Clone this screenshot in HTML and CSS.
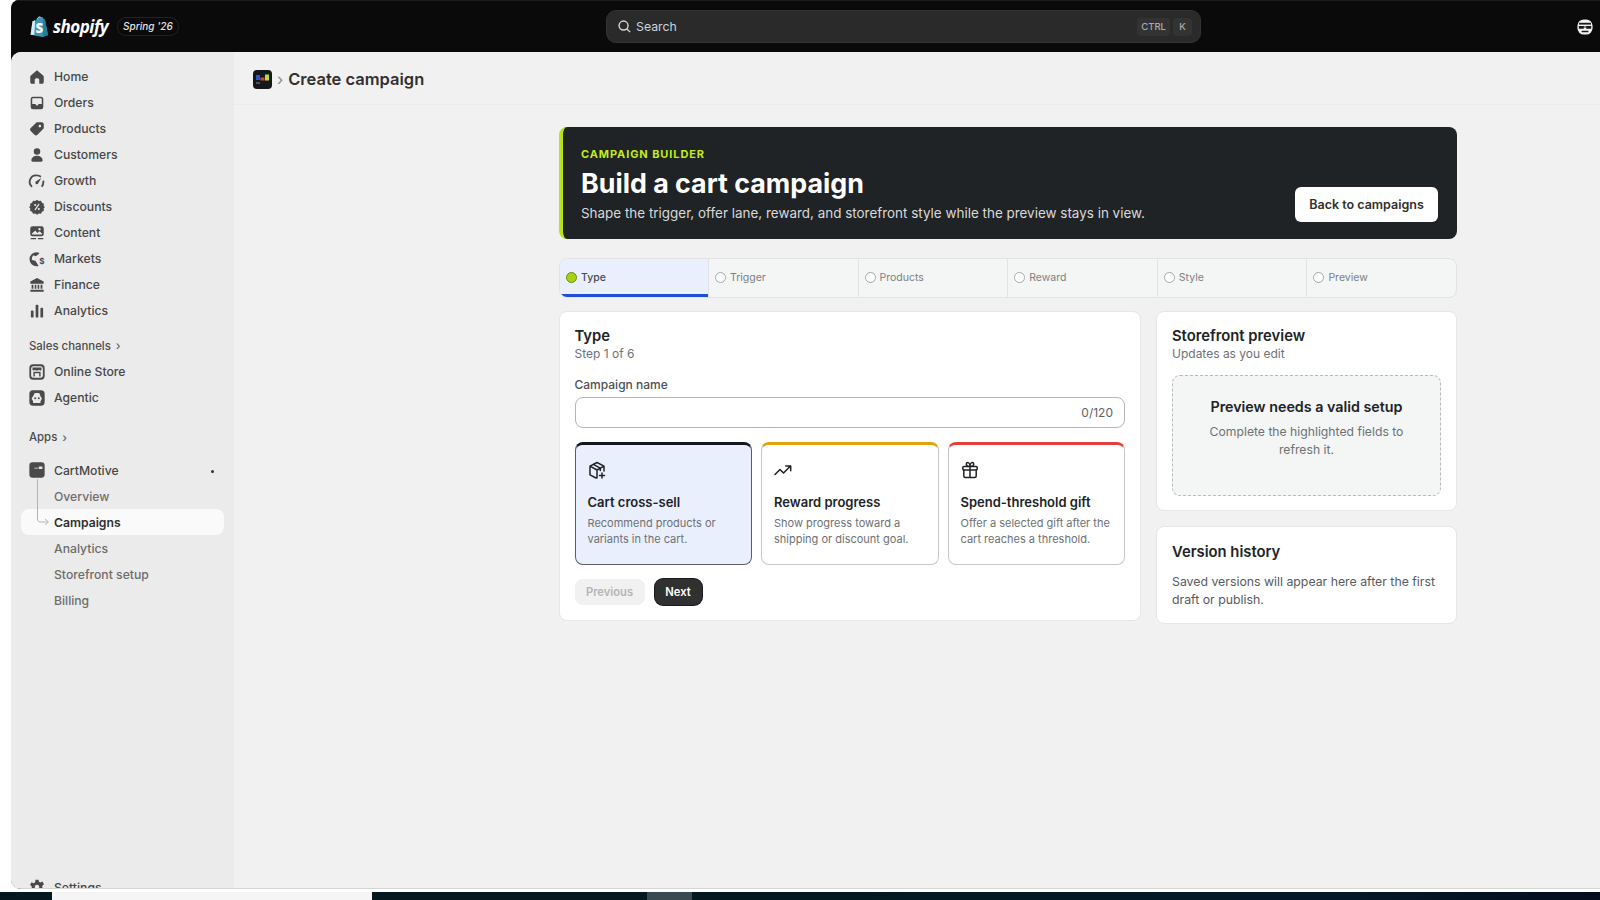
FILE: index.html
```html
<!DOCTYPE html>
<html lang="en">
<head>
  <meta charset="UTF-8">
  <title>Create campaign</title>
  <link rel="stylesheet" href="styles.css">
</head>
<body>
  <div class="window">
    <header class="topbar">
      <div class="brand">
        <svg class="bag" viewBox="0 0 20 23" width="19" height="22">
          <path d="M2.6 5.4 7 4c.6-2 1.900-3.600 3.400-3.600.6 0 1 .3 1.300.7l1.400-.2 1.300 2 1.200 1L18.800 20 13.400 22 .6 19.600z" fill="#3d93b8"/>
          <path d="M2.600 5.400 5.400 4.500 4.500 20 .6 19.600z" fill="#d4edf6"/>
          <path d="M7.200 4c.5-1.800 1.700-3 3-3 .4 0 .8.200 1 .5" fill="none" stroke="#cfe6ef" stroke-width=".8"/>
          <path d="M13.600 3 15 4l1 .4L19 20l-5.600 2z" fill="#1f7f9c"/>
          <text x="5.800" y="17.500" class="bag-s">S</text>
        </svg>
        <span class="wordmark">shopify</span>
        <span class="season">Spring '26</span>
      </div>
      <div class="search">
        <svg viewBox="0 0 16 16" width="15" height="15" fill="none" stroke="#d6d6d6" stroke-width="1.5"><circle cx="7" cy="7" r="4.8"/><path d="m10.600 10.600 3.400 3.400"/></svg>
        <span class="search-label">Search</span>
        <kbd class="key">CTRL</kbd>
        <kbd class="key">K</kbd>
      </div>
      <svg class="avatar" viewBox="0 0 16 16" width="16" height="16">
        <rect x=".4" y=".4" width="15.200" height="15.200" rx="6.500" fill="#f2f2f2"/>
        <path d="M2 3.800h12v1.800H2z" fill="#1a1a1a"/>
        <path d="M1.800 7h5v2.800h-5zM9.200 7h5v2.800h-5zM6 7.400h4v1H6zM4.600 11.800h6.800v1.400H4.600z" fill="#1a1a1a"/>
      </svg>
    </header>

    <div class="shell">
      <nav class="sidebar">
        <a class="nav-row"><svg class="nav-icon" viewBox="0 0 20 20"><path d="M10 2.500 3.200 8.300c-.4.300-.7.800-.7 1.400v6.100c0 .9.700 1.700 1.700 1.700H7.500v-4.200c0-1 .8-1.800 1.800-1.800h1.400c1 0 1.800.8 1.800 1.800v4.200h3.300c1 0 1.700-.8 1.700-1.700V9.700c0-.6-.3-1.100-.7-1.400z"/></svg>Home</a>
        <a class="nav-row"><svg class="nav-icon" viewBox="0 0 20 20"><path fill-rule="evenodd" d="M5.500 3h9A2.500 2.500 0 0 1 17 5.500v9a2.500 2.500 0 0 1-2.500 2.500h-9A2.500 2.500 0 0 1 3 14.500v-9A2.500 2.500 0 0 1 5.500 3zm-.8 8.200V5.500c0-.5.4-.8.8-.8h9c.4 0 .8.300.8.800v5.700h-3.200c-.4 0-.7.300-.8.600-.2.700-.8 1.200-1.300 1.200s-1.100-.5-1.300-1.200c-.1-.3-.4-.6-.8-.6z"/></svg>Orders</a>
        <a class="nav-row"><svg class="nav-icon" viewBox="0 0 20 20"><path fill-rule="evenodd" d="M11.500 2.500h3.700c1.300 0 2.300 1 2.300 2.300v3.700c0 .6-.2 1.200-.7 1.600l-6.300 6.400c-.9.900-2.400.9-3.300 0l-4.200-4.200c-.9-.9-.9-2.400 0-3.300l6.400-6.300c.4-.3 1-.2 2.100-.2zm1.700 5.700a1.400 1.400 0 1 0 0-2.800 1.400 1.400 0 0 0 0 2.800z"/></svg>Products</a>
        <a class="nav-row"><svg class="nav-icon" viewBox="0 0 20 20"><circle cx="10" cy="6" r="3.600"/><path d="M10 10.800c-3.600 0-6 2-6.300 4.800-.1 1 .6 1.800 1.600 1.800h9.400c1 0 1.700-.8 1.600-1.800-.3-2.800-2.700-4.800-6.300-4.800z"/></svg>Customers</a>
        <a class="nav-row"><svg class="nav-icon" viewBox="0 0 20 20"><path class="stroke" d="M4.500 16.500A7.200 7.200 0 0 1 10 3.800c1.700 0 3.200.6 4.400 1.500M17 9.500c.3 2.700-.4 5-1.700 7"/><path d="m14.800 6.600-3.300 5.600a1.700 1.700 0 1 1-2.500-1.800z"/></svg>Growth</a>
        <a class="nav-row"><svg class="nav-icon" viewBox="0 0 20 20"><path fill-rule="evenodd" d="m10 2 2 1.400 2.400-.3 1.100 2.200 2.200 1.100-.3 2.400L18.800 10l-1.400 1.800.3 2.400-2.200 1.100-1.100 2.200-2.400-.3L10 18.600l-2-1.400-2.400.3-1.100-2.200-2.200-1.100.3-2.400L1.200 10l1.400-1.200-.3-2.400 2.200-1.100 1.100-2.200 2.400.3zM8 9a1.200 1.200 0 1 0 0-2.400A1.200 1.200 0 0 0 8 9zm4 4.400a1.200 1.200 0 1 0 0-2.400 1.200 1.200 0 0 0 0 2.400zm.8-6.300-.9-.9-4.700 6.700.9.900z"/></svg>Discounts</a>
        <a class="nav-row"><svg class="nav-icon" viewBox="0 0 20 20"><path fill-rule="evenodd" d="M5 2.500h10A2.500 2.500 0 0 1 17.500 5v6a2.500 2.500 0 0 1-2.500 2.500H5A2.500 2.500 0 0 1 2.500 11V5A2.500 2.500 0 0 1 5 2.500zm-.8 8.300c.1.500.4.900.8.900h10c.4 0 .8-.4.800-.9l-3-2.800-2.400 2-2.300-2.800zM12.800 7a1.300 1.300 0 1 0 0-2.600 1.300 1.300 0 0 0 0 2.600z"/><path d="M3 15.500h6V17H3zM11 15.500h6V17h-6z"/></svg>Content</a>
        <a class="nav-row"><svg class="nav-icon" viewBox="0 0 20 20"><path d="M9.500 2.500a7.800 7.800 0 0 0 0 15.600c.8 0 1.600-.1 2.300-.4-.8-1-1.300-2-1.800-2.900L8.200 12l-3.800-.8c-.5-1.800.1-4 1.600-5.400l2.500 1.200 2.500-1.700L12.800 3.200c-1-.4-2.100-.7-3.300-.7z"/><text x="12.400" y="15.600" class="icon-dollar">$</text></svg>Markets</a>
        <a class="nav-row"><svg class="nav-icon" viewBox="0 0 20 20"><path d="M10 2.200 2.600 6.200v2.300h14.800V6.200zM4 9.800h2v4.400H4zM7.500 9.800h1.800v4.400H7.500zM10.700 9.800h1.800v4.400h-1.800zM14 9.800h2v4.400h-2zM2.600 15.400h14.800v2.200H2.600z"/></svg>Finance</a>
        <a class="nav-row"><svg class="nav-icon" viewBox="0 0 20 20"><rect x="3.200" y="9.500" width="3" height="7.800" rx="1"/><rect x="8.500" y="3" width="3" height="14.300" rx="1"/><rect x="13.800" y="6.500" width="3" height="10.800" rx="1"/></svg>Analytics</a>

        <div class="nav-heading">Sales channels <span class="chevron">›</span></div>
        <a class="nav-row"><svg class="nav-icon" viewBox="0 0 20 20"><rect x="1.500" y="1.500" width="17" height="17" rx="4"/><rect x="3.500" y="3.500" width="13" height="13" rx="2.500" fill="#ebebeb"/><path d="M5 5h10v2.400c0 1.200-2.400 1.200-2.500 0-.1 1.200-5 1.200-5 0C7.400 8.600 5 8.600 5 7.400zM6 9.800h8V15h-1.600v-3.600H7.600V15H6z"/></svg>Online Store</a>
        <a class="nav-row"><svg class="nav-icon" viewBox="0 0 20 20"><rect x="1.500" y="1.500" width="17" height="17" rx="4"/><path fill-rule="evenodd" d="M7.500 4.500h5l1.400 3.500 1.600 2.500-1.600 3v2H5.600v-2L4 10.500 5.600 8zm.5 4.800a1.100 1.100 0 1 0 0 2.200 1.100 1.100 0 0 0 0-2.200zm4 0a1.100 1.100 0 1 0 0 2.200 1.100 1.100 0 0 0 0-2.200z" fill="#ebebeb"/></svg>Agentic</a>

        <div class="nav-heading nav-heading-apps">Apps <span class="chevron">›</span></div>
        <div class="app-group">
          <svg class="app-tree" viewBox="0 0 14 46" width="14" height="46" fill="none" stroke="#b3b3b3" stroke-width="1"><path d="M.5 0v40c0 2 1 3 3 3h7M8 40l3.500 3-3.500 3"/></svg>
          <a class="nav-row app-row"><svg class="nav-icon" viewBox="0 0 20 20"><rect x="1.500" y="1.500" width="17" height="17" rx="3.500" fill="#4a4a4a"/><path d="M12 6h4v3h-4zM7 7.500h4v.8H7z" fill="#e8e8e8"/></svg>CartMotive<span class="app-dot"></span></a>
          <a class="nav-row sub-row">Overview</a>
          <a class="nav-row sub-row sub-row-active">Campaigns</a>
          <a class="nav-row sub-row">Analytics</a>
          <a class="nav-row sub-row">Storefront setup</a>
          <a class="nav-row sub-row">Billing</a>
        </div>

        <a class="nav-row nav-settings"><svg class="nav-icon" viewBox="0 0 20 20"><path fill-rule="evenodd" d="M8.300 2h3.400l.5 2.300 1.700.8 2.100-1.100 1.700 2.900-1.800 1.600v2l1.800 1.600-1.700 2.900-2.100-1.100-1.700.8-.5 2.300H8.300l-.5-2.300-1.700-.8L4 15.800l-1.700-2.900L4.100 11.300v-2L2.300 7.700 4 4.800l2.100 1.100 1.700-.8zM10 12.500a2.500 2.500 0 1 0 0-5 2.500 2.500 0 0 0 0 5z"/></svg>Settings</a>
      </nav>

      <main class="main">
        <div class="page-header">
          <svg class="page-icon" viewBox="0 0 19 19" width="19" height="19">
            <rect width="19" height="19" rx="4" fill="#14181c"/>
            <rect x="3" y="5" width="4" height="5" fill="#2f56c9"/>
            <rect x="7.500" y="7.500" width="4" height="3" fill="#d8432f"/>
            <rect x="12" y="4.500" width="4" height="6" fill="#b7d84a"/>
            <rect x="3" y="12.500" width="4" height="1" fill="#8a8a8a"/>
          </svg>
          <span class="crumb-sep">›</span>
          <h1 class="page-title">Create campaign</h1>
        </div>

        <div class="builder">
          <section class="hero">
            <div class="hero-copy">
              <div class="hero-eyebrow">CAMPAIGN BUILDER</div>
              <h2 class="hero-title">Build a cart campaign</h2>
              <p class="hero-text">Shape the trigger, offer lane, reward, and storefront style while the preview stays in view.</p>
            </div>
            <button class="back-button">Back to campaigns</button>
          </section>

          <ol class="steps">
            <li class="step step-active"><span class="step-dot"></span>Type</li>
            <li class="step"><span class="step-dot"></span>Trigger</li>
            <li class="step"><span class="step-dot"></span>Products</li>
            <li class="step"><span class="step-dot"></span>Reward</li>
            <li class="step"><span class="step-dot"></span>Style</li>
            <li class="step"><span class="step-dot"></span>Preview</li>
          </ol>

          <div class="columns">
            <section class="card card-main">
              <h3 class="card-title">Type</h3>
              <div class="card-sub">Step 1 of 6</div>
              <label class="field-label">Campaign name</label>
              <div class="field"><span class="field-count">0/120</span></div>
              <div class="types">
                <div class="type type-selected">
                  <svg class="type-icon" viewBox="0 0 20 20" fill="none"><path d="M9 18 3 14.800V6.200L10 2.500l7 3.700v4.800M3 6.200l7 3.800 7-3.800M10 10v8M6.300 4.300l7 3.800v2.400M15 13v5M12.500 15.500h5"/></svg>
                  <div class="type-title">Cart cross-sell</div>
                  <p class="type-text">Recommend products or variants in the cart.</p>
                </div>
                <div class="type type-amber">
                  <svg class="type-icon" viewBox="0 0 20 20" fill="none"><path d="m2 14.500 5-5 3.500 3.500 7-7M12.800 6h4.900v4.800"/></svg>
                  <div class="type-title">Reward progress</div>
                  <p class="type-text">Show progress toward a shipping or discount goal.</p>
                </div>
                <div class="type type-red">
                  <svg class="type-icon" viewBox="0 0 20 20" fill="none"><rect x="2.800" y="6.500" width="14.400" height="3.500" rx="1"/><path d="M3.800 10v6c0 .9.700 1.500 1.500 1.500h9.400c.8 0 1.500-.6 1.500-1.500v-6M10 6.500v11M10 6.500C8 6.500 6.300 5.500 6.300 4c0-1 .7-1.500 1.500-1.500C9 2.500 10 4.500 10 6.500zm0 0c2 0 3.700-1 3.700-2.500 0-1-.7-1.500-1.500-1.500C11 2.500 10 4.500 10 6.500z"/></svg>
                  <div class="type-title">Spend-threshold gift</div>
                  <p class="type-text">Offer a selected gift after the cart reaches a threshold.</p>
                </div>
              </div>
              <div class="actions">
                <button class="btn-prev">Previous</button>
                <button class="btn-next">Next</button>
              </div>
            </section>

            <div class="side">
              <section class="card card-preview">
                <h3 class="card-title">Storefront preview</h3>
                <div class="card-sub">Updates as you edit</div>
                <div class="preview-empty">
                  <div class="preview-title">Preview needs a valid setup</div>
                  <p class="preview-text">Complete the highlighted fields to refresh it.</p>
                </div>
              </section>
              <section class="card card-history">
                <h3 class="card-title">Version history</h3>
                <p class="history-text">Saved versions will appear here after the first draft or publish.</p>
              </section>
            </div>
          </div>
        </div>
      </main>
    </div>
  </div>

  <div class="taskbar">
    <span class="task task-dark"></span>
    <span class="task task-light"></span>
    <span class="task task-dark task-mid"></span>
    <span class="task task-grey"></span>
    <span class="task task-rest"></span>
  </div>
</body>
</html>
```

FILE: styles.css
```css
* {
  box-sizing: border-box;
}
body {
  margin: 0;
  height: 100vh;
  overflow: hidden;
  background: #fff;
  font-family: Inter, "Liberation Sans", sans-serif;
  color: #303030;
}
h1, h2, h3, p, ol {
  margin: 0;
  padding: 0;
}

.window {
  margin-left: 11px;
  height: 889px;
  display: flex;
  flex-direction: column;
  background: #0a0a0a;
  border-top-left-radius: 8px;
  border-bottom-left-radius: 10px;
  overflow: hidden;
}

/* top bar */
.topbar {
  height: 52px;
  flex: none;
  display: flex;
  align-items: center;
  border-top: 1px solid #1c1c1c;
  padding-right: 7px;
}
.brand {
  width: 595px;
  padding-left: 19px;
  display: flex;
  align-items: center;
}
.bag {
  flex: none;
}
.bag-s {
  font-family: "Open Sans", sans-serif;
  font-weight: 800;
  font-size: 14px;
  fill: #fff;
}
.wordmark {
  margin-left: 4px;
  font-family: "Open Sans", sans-serif;
  font-weight: 700;
  font-style: italic;
  font-size: 17px;
  letter-spacing: -0.5px;
  color: #fff;
}
.season {
  margin-left: 9px;
  height: 19px;
  padding: 0 5px;
  border: 1px solid #222;
  border-radius: 9px;
  font-size: 10px;
  font-style: italic;
  font-weight: 500;
  line-height: 17px;
  color: #e3e3e3;
}
.search {
  width: 595px;
  height: 33px;
  display: flex;
  align-items: center;
  gap: 3px;
  padding: 0 8px 0 10px;
  background: #2a2a2a;
  border: 1px solid #333;
  border-radius: 10px;
  font-size: 12.3px;
  color: #cfd3d8;
}
.search-label {
  margin-left: 1px;
  margin-top: -1px;
  flex: 1;
}
.key {
  height: 18px;
  padding: 0 4px;
  border-radius: 4px;
  background: #333;
  font-family: inherit;
  font-size: 9.5px;
  font-weight: 500;
  line-height: 18px;
  color: #a9acaf;
}
.key:last-child {
  min-width: 19px;
  text-align: center;
}
.avatar {
  margin-left: auto;
}

/* shell */
.shell {
  flex: 1;
  min-height: 0;
  display: flex;
  border-top-left-radius: 10px;
  overflow: hidden;
  border-bottom: 1px solid #d4d4d4;
  background: #f1f1f1;
}

/* sidebar */
.sidebar {
  width: 223px;
  flex: none;
  display: flex;
  flex-direction: column;
  padding: 11.5px 10px 0;
  background: #ebebeb;
  font-size: 12.2px;
}
.nav-row {
  position: relative;
  height: 26px;
  flex: none;
  display: flex;
  align-items: center;
  gap: 8px;
  padding-left: 7px;
  font-weight: 500;
  color: #474747;
}
.nav-icon {
  width: 18px;
  height: 18px;
  flex: none;
  fill: #4a4a4a;
}
.nav-icon .stroke {
  fill: none;
  stroke: #4a4a4a;
  stroke-width: 2;
}
.icon-dollar {
  font-size: 9px;
  font-weight: 700;
  fill: #4a4a4a;
}
.nav-heading {
  height: 26px;
  flex: none;
  margin-top: 9px;
  padding-left: 8px;
  display: flex;
  align-items: center;
  gap: 5px;
  font-size: 11.4px;
  font-weight: 500;
  color: #4d4d4d;
}
.nav-heading-apps {
  margin-top: 13.5px;
}
.chevron {
  font-size: 12px;
  color: #666;
}
.app-group {
  position: relative;
  margin-top: 7px;
}
.app-tree {
  position: absolute;
  left: 16px;
  top: 22px;
  z-index: 1;
}
.app-dot {
  position: absolute;
  right: 10px;
  top: 13px;
  width: 3px;
  height: 3px;
  border-radius: 50%;
  background: #303030;
}
.sub-row {
  padding-left: 33px;
  color: #6d6d6d;
}
.sub-row-active {
  background: #fafafa;
  border-radius: 8px;
  font-weight: 600;
  color: #303030;
}
.nav-settings {
  margin-top: auto;
  margin-bottom: -12px;
}

/* main */
.main {
  flex: 1;
  min-width: 0;
}
.page-header {
  height: 53px;
  display: flex;
  align-items: center;
  padding: 2px 0 0 19px;
  border-bottom: 1px solid #ebebeb;
}
.crumb-sep {
  margin: 0 5px 0 5px;
  font-size: 16px;
  color: #8a8a8a;
}
.page-title {
  font-size: 16.5px;
  font-weight: 600;
  color: #303030;
}
.builder {
  width: 898px;
  margin: 22px 0 0 325px;
}

/* hero */
.hero {
  height: 112px;
  display: flex;
  align-items: flex-end;
  justify-content: space-between;
  padding: 19px 19px 17px 18px;
  background: #202326;
  border-left: 4px solid #b9e21e;
  border-radius: 8px;
}
.hero-eyebrow {
  font-size: 11px;
  font-weight: 700;
  letter-spacing: 0.9px;
  line-height: 14px;
  color: #c1ec1d;
}
.hero-title {
  margin-top: 5px;
  font-size: 26.8px;
  font-weight: 700;
  line-height: 34px;
  color: #fff;
}
.hero-text {
  margin-top: 4px;
  font-size: 13.45px;
  line-height: 18px;
  color: #d9dadb;
}
.back-button {
  width: 143px;
  height: 35px;
  padding-bottom: 2px;
  background: #fff;
  border: 0;
  border-radius: 6px;
  font-family: inherit;
  font-size: 12.5px;
  font-weight: 600;
  color: #303030;
}

/* steps */
.steps {
  list-style: none;
  height: 40px;
  margin-top: 19px;
  display: grid;
  grid-template-columns: 148px repeat(5, 1fr);
  background: #f4f5f5;
  border: 1px solid #e3e3e3;
  border-radius: 8px;
  overflow: hidden;
}
.step {
  display: flex;
  align-items: center;
  gap: 4px;
  padding: 0 0 2px 6px;
  border-left: 1px solid #e3e3e3;
  font-size: 10.5px;
  font-weight: 400;
  color: #7b7f83;
}
.step:first-child {
  border-left: 0;
}
.step-dot {
  width: 11px;
  height: 11px;
  border: 1.5px solid #a5a8ab;
  border-radius: 50%;
  background: #fff;
}
.step-active {
  background: #e9effd;
  box-shadow: inset 0 -3px 0 #1d4ed8;
  font-weight: 500;
  color: #474b50;
}
.step-active .step-dot {
  background: #a6d30f;
  border-color: #6e8c10;
}

/* cards */
.columns {
  margin-top: 13px;
  display: grid;
  grid-template-columns: 582px 301px;
  gap: 15px;
  align-items: start;
}
.card {
  padding: 15px 15px 14px;
  background: #fff;
  border: 1px solid #e6e6e6;
  border-radius: 8px;
}
.card-main {
  height: 310px;
  padding-left: 14.5px;
}
.card-title {
  font-size: 14.8px;
  font-weight: 600;
  line-height: 18px;
  color: #202326;
}
.card-sub {
  margin-top: 1px;
  font-size: 12px;
  line-height: 16px;
  color: #6d7175;
}
.field-label {
  display: block;
  margin-top: 15px;
  font-size: 12px;
  line-height: 16px;
  font-weight: 500;
  color: #4d4f52;
}
.field {
  height: 31px;
  margin-top: 4px;
  padding-right: 11px;
  display: flex;
  align-items: center;
  justify-content: flex-end;
  border: 1px solid #b5b5b5;
  border-radius: 8px;
  background: #fff;
}
.field-count {
  font-size: 12px;
  color: #5e6266;
}
.types {
  margin-top: 14px;
  display: grid;
  grid-template-columns: repeat(3, 1fr);
  gap: 9px;
}
.type {
  height: 123px;
  padding: 15px 12px 0;
  border: 1px solid #c4c7ca;
  border-radius: 8px;
  background: #fff;
}
.type-selected {
  background: #e9effd;
  border-color: #5a5d60;
  border-top: 3px solid #14181c;
}
.type-amber {
  border-top: 3px solid #e0a30f;
}
.type-red {
  border-top: 3px solid #e2403a;
}
.type-icon {
  display: block;
  width: 20px;
  height: 20px;
  margin-left: -1px;
  stroke: #202326;
  stroke-width: 1.5;
  stroke-linejoin: round;
  stroke-linecap: round;
}
.type-title {
  margin-top: 14px;
  font-size: 13px;
  font-weight: 600;
  line-height: 17px;
  color: #202326;
}
.type-text {
  margin-top: 4px;
  font-size: 11px;
  line-height: 16px;
  color: #6d7175;
}
.actions {
  margin-top: 14px;
  display: flex;
  gap: 10px;
}
.btn-prev,
.btn-next {
  height: 26px;
  border: 0;
  border-radius: 8px;
  font-family: inherit;
  font-size: 11.2px;
  font-weight: 600;
}
.btn-prev {
  width: 70px;
  background: #f1f1f1;
  color: #b5b5b5;
}
.btn-next {
  width: 47px;
  background: #303030;
  color: #fff;
  box-shadow: 0 0 0 1px #1a1a1a;
}
.side {
  display: flex;
  flex-direction: column;
  gap: 15px;
}
.card-preview {
  height: 200px;
}
.preview-empty {
  height: 121px;
  margin-top: 13px;
  padding-top: 22px;
  text-align: center;
  background: #f4f5f5;
  border: 1px dashed #b9bcbf;
  border-radius: 8px;
}
.preview-title {
  font-size: 14.3px;
  font-weight: 600;
  line-height: 17px;
  color: #202326;
}
.preview-text {
  width: 210px;
  margin: 8px auto 0;
  font-size: 12.2px;
  line-height: 18.4px;
  color: #6d7175;
}
.card-history {
  height: 98px;
  padding-top: 16px;
}
.history-text {
  margin-top: 12px;
  font-size: 12.3px;
  line-height: 18.4px;
  color: #565a5e;
}

/* desktop strip under the window */
.taskbar {
  height: 8px;
  margin-top: 3px;
  display: flex;
  background: #02141d;
}
.task {
  display: block;
  height: 100%;
}
.task-dark {
  width: 52px;
  background: #03191f;
}
.task-light {
  width: 320px;
  background: #f5f5f5;
}
.task-mid {
  width: 275px;
}
.task-grey {
  width: 45px;
  background: #3a4a50;
}
.task-rest {
  flex: 1;
  background: linear-gradient(90deg, #03191f, #03192a 70%, #040d1e);
}
```
